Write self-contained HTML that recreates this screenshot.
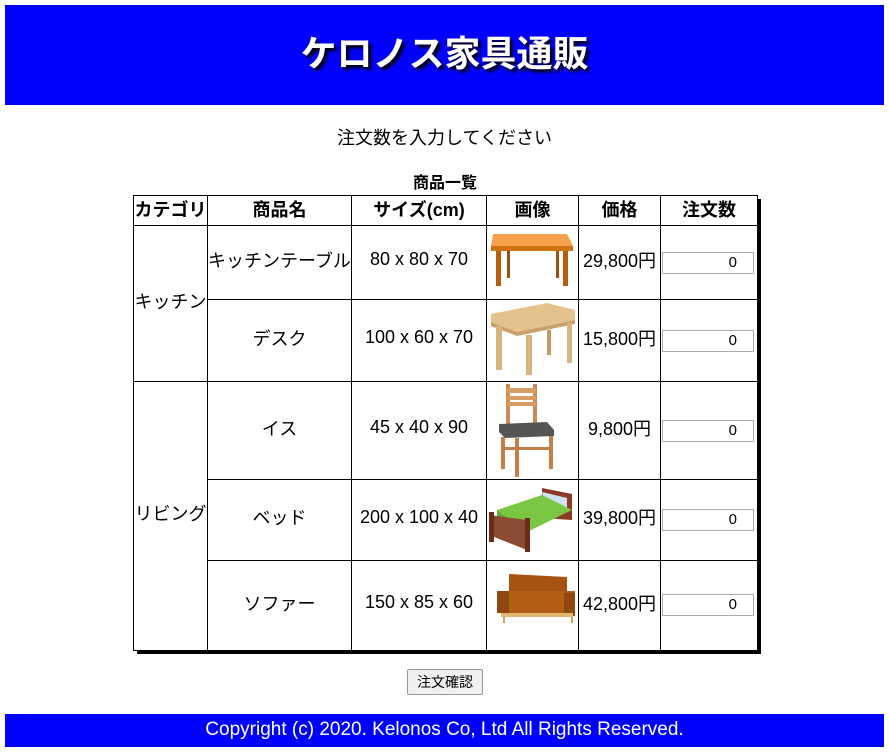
<!DOCTYPE html>
<html><head><meta charset="utf-8"><style>
body{margin:0;width:889px;height:752px;background:#fff;position:relative;font-family:"Liberation Sans","Noto Sans CJK JP",sans-serif;color:#000;overflow:hidden}
.a{position:absolute}
.h{left:5px;top:5px;width:879px;height:100px;background:#0000ff}
.t{left:5px;width:879px;top:25px;text-align:center;color:#fff;font-size:36px;font-weight:bold;text-shadow:3px 3px 3px #000}
.c{position:absolute;text-align:center;font-size:18px;display:flex;align-items:center;justify-content:center;white-space:nowrap;margin-top:-3px}
.b{font-weight:bold;margin-top:-2px}
.l{position:absolute;background:#000}
.in{position:absolute;width:92px;height:22px;border:1px solid #aaa;box-sizing:border-box;text-align:right;padding-right:16px;font-size:15px;line-height:20px;background:#fff}
</style></head><body>
<div class="a h"></div>
<div class="a t">ケロノス家具通販</div>
<div class="a" style="left:0;width:889px;top:124px;text-align:center;font-size:18px">注文数を入力してください</div>
<div class="a b" style="left:133px;width:624px;top:171px;text-align:center;font-size:16px">商品一覧</div>
<div class="a" style="left:757px;top:199px;width:4px;height:455px;background:#000"></div>
<div class="a" style="left:137px;top:650px;width:624px;height:4px;background:#000"></div>
<div class="l" style="left:133px;top:195px;width:625px;height:1px"></div>
<div class="l" style="left:133px;top:225px;width:625px;height:1px"></div>
<div class="l" style="left:207px;top:299px;width:551px;height:1px"></div>
<div class="l" style="left:133px;top:381px;width:625px;height:1px"></div>
<div class="l" style="left:207px;top:479px;width:551px;height:1px"></div>
<div class="l" style="left:207px;top:560px;width:551px;height:1px"></div>
<div class="l" style="left:133px;top:650px;width:625px;height:1px"></div>
<div class="l" style="left:133px;top:195px;width:1px;height:456px"></div>
<div class="l" style="left:207px;top:195px;width:1px;height:456px"></div>
<div class="l" style="left:351px;top:195px;width:1px;height:456px"></div>
<div class="l" style="left:486px;top:195px;width:1px;height:456px"></div>
<div class="l" style="left:578px;top:195px;width:1px;height:456px"></div>
<div class="l" style="left:660px;top:195px;width:1px;height:456px"></div>
<div class="l" style="left:757px;top:195px;width:1px;height:456px"></div>
<div class="c b" style="left:133px;width:75px;top:196px;height:29px">カテゴリ</div>
<div class="c b" style="left:207px;width:145px;top:196px;height:29px">商品名</div>
<div class="c b" style="left:351px;width:136px;top:196px;height:29px">サイズ(cm)</div>
<div class="c b" style="left:486px;width:93px;top:196px;height:29px">画像</div>
<div class="c b" style="left:578px;width:83px;top:196px;height:29px">価格</div>
<div class="c b" style="left:660px;width:98px;top:196px;height:29px">注文数</div>
<div class="c" style="left:133px;width:75px;top:226px;height:155px">キッチン</div>
<div class="c" style="left:133px;width:75px;top:382px;height:268px">リビング</div>
<div class="c" style="left:207px;width:145px;top:226px;height:73px">キッチンテーブル</div>
<div class="c" style="left:351px;width:136px;top:226px;height:73px">80 x 80 x 70</div>
<div class="c" style="left:578px;width:83px;top:226px;height:73px">29,800円</div>
<div class="in" style="left:662px;top:252px">0</div>
<div class="c" style="left:207px;width:145px;top:300px;height:81px">デスク</div>
<div class="c" style="left:351px;width:136px;top:300px;height:81px">100 x 60 x 70</div>
<div class="c" style="left:578px;width:83px;top:300px;height:81px">15,800円</div>
<div class="in" style="left:662px;top:330px">0</div>
<div class="c" style="left:207px;width:145px;top:382px;height:97px">イス</div>
<div class="c" style="left:351px;width:136px;top:382px;height:97px">45 x 40 x 90</div>
<div class="c" style="left:578px;width:83px;top:382px;height:97px">9,800円</div>
<div class="in" style="left:662px;top:420px">0</div>
<div class="c" style="left:207px;width:145px;top:480px;height:80px">ベッド</div>
<div class="c" style="left:351px;width:136px;top:480px;height:80px">200 x 100 x 40</div>
<div class="c" style="left:578px;width:83px;top:480px;height:80px">39,800円</div>
<div class="in" style="left:662px;top:509px">0</div>
<div class="c" style="left:207px;width:145px;top:561px;height:89px">ソファー</div>
<div class="c" style="left:351px;width:136px;top:561px;height:89px">150 x 85 x 60</div>
<div class="c" style="left:578px;width:83px;top:561px;height:89px">42,800円</div>
<div class="in" style="left:662px;top:594px">0</div>
<svg class="a" style="left:487px;top:226px" width="91" height="73">
<polygon points="6,8 80,8 86,20 4,20" fill="#f7a24a"/><rect x="4" y="20" width="82" height="5" fill="#d2720f"/>
<rect x="9" y="25" width="5" height="35" fill="#b75d10"/><rect x="76" y="25" width="5" height="35" fill="#b75d10"/>
<rect x="20" y="25" width="3" height="27" fill="#9a5010"/><rect x="69" y="25" width="3" height="27" fill="#9a5010"/></svg>
<svg class="a" style="left:487px;top:300px" width="91" height="81">
<polygon points="4,14 60,3 88,10 88,20 30,32 4,22" fill="#e3c28e"/><polygon points="4,22 30,32 88,20 88,24 30,36 4,26" fill="#c9a06a"/>
<rect x="9" y="26" width="6" height="44" fill="#d8b27f"/><rect x="39" y="35" width="6" height="40" fill="#d8b27f"/><rect x="80" y="23" width="5" height="40" fill="#d8b27f"/><rect x="60" y="30" width="4" height="25" fill="#c29a66"/></svg>
<svg class="a" style="left:487px;top:382px" width="91" height="97">
<rect x="19" y="2" width="4" height="50" fill="#c98a55"/><rect x="46" y="2" width="4" height="50" fill="#c98a55"/>
<rect x="20" y="6" width="29" height="5" fill="#d89b62"/><rect x="20" y="14" width="29" height="4" fill="#d89b62"/><rect x="20" y="20" width="29" height="4" fill="#d89b62"/>
<polygon points="12,42 60,40 67,48 67,54 18,56 12,50" fill="#555"/>
<rect x="14" y="55" width="4" height="32" fill="#c47e46"/><rect x="28" y="56" width="4" height="39" fill="#c47e46"/><rect x="62" y="54" width="4" height="33" fill="#c47e46"/><rect x="18" y="65" width="44" height="3" fill="#c47e46"/></svg>
<svg class="a" style="left:487px;top:480px" width="91" height="80">
<polygon points="55,8 85,14 85,40 55,38" fill="#8b3a25"/><polygon points="55,12 80,18 80,28 58,26" fill="#cfe2ef"/>
<polygon points="10,30 55,15 85,30 40,52" fill="#79c743"/><polygon points="10,30 40,52 40,68 10,46" fill="#63a936"/>
<polygon points="2,35 40,40 40,70 2,55" fill="#8e4b33"/><rect x="2" y="32" width="5" height="30" fill="#6b2c1c"/><rect x="38" y="38" width="5" height="34" fill="#6b2c1c"/></svg>
<svg class="a" style="left:487px;top:561px" width="91" height="89">
<polygon points="22,13 80,16 80,35 22,32" fill="#a65312"/><polygon points="10,30 88,30 88,55 10,52" fill="#b35e16"/>
<rect x="10" y="30" width="12" height="22" fill="#8f480f"/><rect x="77" y="32" width="11" height="23" fill="#8f480f"/>
<rect x="14" y="52" width="72" height="4" fill="#e2b873"/><rect x="16" y="56" width="2" height="6" fill="#d0a060"/><rect x="84" y="56" width="2" height="6" fill="#d0a060"/></svg>
<div class="a" style="left:407px;top:669px;width:76px;height:26px;border:1px solid #999;border-radius:2px;background:#f0f0f0;box-sizing:border-box;text-align:center;font-size:14px;line-height:24px">注文確認</div>
<div class="a" style="left:5px;top:714px;width:879px;height:33px;background:#0000ff;color:#fff;text-align:center;font-size:19px;line-height:31px">Copyright (c) 2020. Kelonos Co, Ltd All Rights Reserved.</div>
</body></html>
